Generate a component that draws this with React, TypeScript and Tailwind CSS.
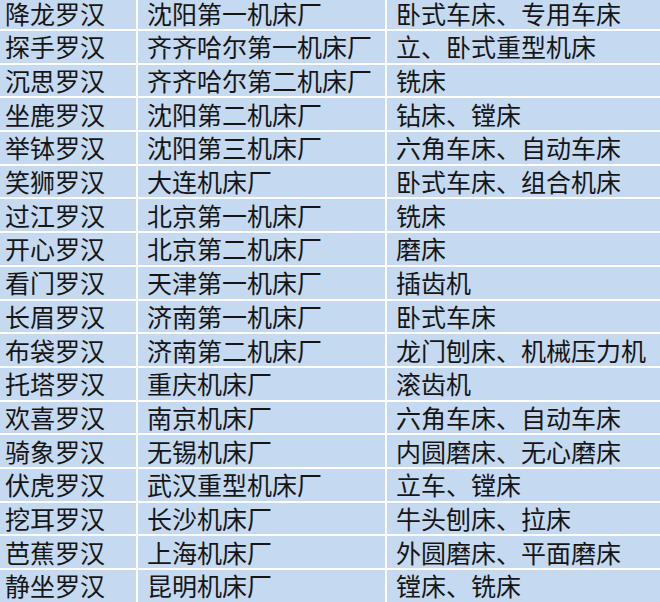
import React from 'react';

const rows: [string, string, string][] = [
  ['降龙罗汉', '沈阳第一机床厂', '卧式车床、专用车床'],
  ['探手罗汉', '齐齐哈尔第一机床厂', '立、卧式重型机床'],
  ['沉思罗汉', '齐齐哈尔第二机床厂', '铣床'],
  ['坐鹿罗汉', '沈阳第二机床厂', '钻床、镗床'],
  ['举钵罗汉', '沈阳第三机床厂', '六角车床、自动车床'],
  ['笑狮罗汉', '大连机床厂', '卧式车床、组合机床'],
  ['过江罗汉', '北京第一机床厂', '铣床'],
  ['开心罗汉', '北京第二机床厂', '磨床'],
  ['看门罗汉', '天津第一机床厂', '插齿机'],
  ['长眉罗汉', '济南第一机床厂', '卧式车床'],
  ['布袋罗汉', '济南第二机床厂', '龙门刨床、机械压力机'],
  ['托塔罗汉', '重庆机床厂', '滚齿机'],
  ['欢喜罗汉', '南京机床厂', '六角车床、自动车床'],
  ['骑象罗汉', '无锡机床厂', '内圆磨床、无心磨床'],
  ['伏虎罗汉', '武汉重型机床厂', '立车、镗床'],
  ['挖耳罗汉', '长沙机床厂', '牛头刨床、拉床'],
  ['芭蕉罗汉', '上海机床厂', '外圆磨床、平面磨床'],
  ['静坐罗汉', '昆明机床厂', '镗床、铣床'],
];

export default function App() {
  return (
    <div className="w-[660px] h-[602px] overflow-hidden bg-[#c5d9f1]">
      <div
        className="mt-[-2.7px] text-[25px] leading-none text-[#161616]"
        style={{ fontFamily: '"Noto Sans CJK SC", "Noto Sans", sans-serif' }}
      >
        {rows.map(([name, factory, product]) => (
          <div key={name} className="flex h-[33.7px] border-b-2 border-white">
            <div className="w-[138px] shrink-0 border-r-2 border-white pl-[5px] flex items-center">
              {name}
            </div>
            <div className="w-[249px] shrink-0 border-r-2 border-white pl-[9px] flex items-center">
              {factory}
            </div>
            <div className="flex-1 pl-[9px] flex items-center">{product}</div>
          </div>
        ))}
      </div>
    </div>
  );
}
